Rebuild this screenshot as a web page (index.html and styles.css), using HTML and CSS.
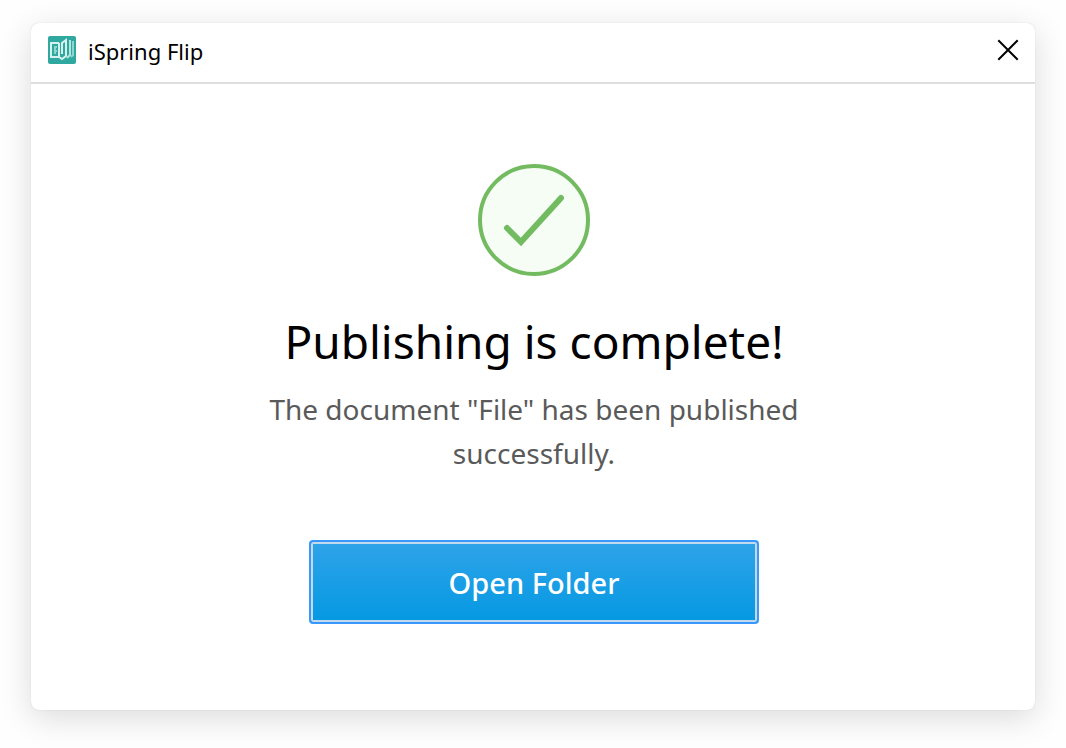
FILE: index.html
```html
<!DOCTYPE html>
<html lang="en">
<head>
<meta charset="utf-8">
<meta name="viewport" content="width=device-width, initial-scale=1">
<title>iSpring Flip</title>
<link rel="stylesheet" href="styles.css">
</head>
<body>
<main class="dialog" role="dialog" aria-labelledby="dialog-name">
  <header class="titlebar">
    <svg class="app-icon" viewBox="0 0 28 28" aria-hidden="true">
      <rect width="28" height="28" rx="2" fill="#2fa9a0"/>
      <path d="M11 21H3V7H11" fill="none" stroke="#d5f2ef" stroke-width="2"/>
      <path d="M7 10V18M7 11H9M7 15H9" fill="none" stroke="#8fd5cf" stroke-width="2"/>
      <path d="M11 7V21L14 23L18 20V4L14 7V18" fill="none" stroke="#d5f2ef" stroke-width="2"/>
      <path d="M22 4V19L19 22" fill="none" stroke="#b5e5e0" stroke-width="2"/>
      <path d="M25 5V19L23 21" fill="none" stroke="#8fd5cf" stroke-width="2"/>
    </svg>
    <span class="app-name" id="dialog-name">iSpring Flip</span>
    <button class="close" type="button" aria-label="Close">
      <svg class="close-icon" viewBox="0 0 20 20" aria-hidden="true"><path d="M1 1L19 19M19 1L1 19"/></svg>
    </button>
  </header>
  <section class="content">
    <svg class="success" viewBox="0 0 112 112" aria-hidden="true">
      <circle cx="56" cy="56" r="54" fill="#f6fdf5" stroke="#73bb61" stroke-width="4"/>
      <path d="M29 64L43 78L83 34" fill="none" stroke="#73bb61" stroke-width="6" stroke-linecap="round"/>
    </svg>
    <h1 class="heading">Publishing is complete!</h1>
    <p class="message">The document "File" has been published successfully.</p>
    <button class="primary" type="button">Open Folder</button>
  </section>
</main>
</body>
</html>
```
FILE: styles.css
```css
* {
  box-sizing: border-box;
}

body {
  display: flex;
  min-height: 100vh;
  margin: 0;
  padding: 23px 31px 38px;
  background: #fefefe;
  color: #000;
  font-family: "Noto Sans", "Open Sans", sans-serif;
}

.dialog {
  flex: 1;
  display: flex;
  flex-direction: column;
  border-radius: 8px;
  background: #fff;
  box-shadow: 0 0 1px rgba(0, 0, 0, 0.2), 0 8px 32px rgba(0, 0, 0, 0.14);
}

.titlebar {
  display: flex;
  align-items: center;
  height: 61px;
  padding: 0 17px 6px;
  border-bottom: 2px solid #dedede;
}

.app-icon {
  width: 28px;
  height: 28px;
}

.app-name {
  margin-left: 12px;
  padding-top: 2px;
  font-size: 22px;
  line-height: 30px;
}

.close {
  display: flex;
  margin-left: auto;
  padding: 0;
  border: 0;
  background: none;
}

.close-icon {
  width: 20px;
  height: 20px;
  overflow: visible;
  fill: none;
  stroke: #000;
  stroke-width: 2;
  stroke-linecap: square;
}

.content {
  display: flex;
  flex-direction: column;
  align-items: center;
  padding: 80px 38px 80px 40px;
}

.success {
  width: 112px;
  height: 112px;
}

.heading {
  margin: 33px 0 0;
  font-size: 46px;
  font-weight: 400;
  line-height: 64px;
  text-align: center;
}

.message {
  max-width: 560px;
  margin: 14px 0 0;
  color: #5a5a5a;
  font-size: 28px;
  line-height: 44px;
  text-align: center;
}

.primary {
  width: 450px;
  max-width: 100%;
  height: 84px;
  margin-top: 65px;
  padding: 2px 0 0;
  border: 2px solid #3898fc;
  border-radius: 4px;
  background: linear-gradient(#2fa3e9, #0499e2);
  box-shadow: inset 0 0 0 2px #c3d9ee;
  color: #fff;
  font: 500 29px/40px "Noto Sans", "Open Sans", sans-serif;
}
```
